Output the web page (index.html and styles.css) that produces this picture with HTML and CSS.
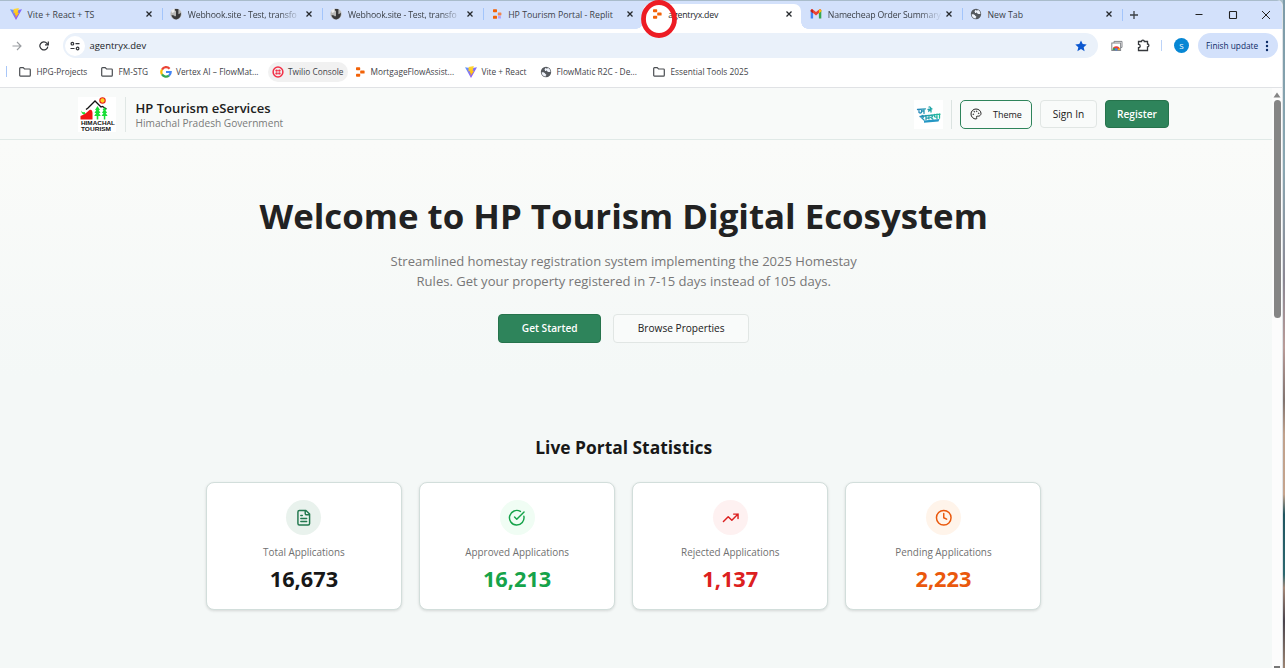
FILE: index.html
```
<!DOCTYPE html>
<html lang="en">
<head>
<meta charset="utf-8">
<title>HP Tourism eServices</title>
<link rel="stylesheet" href="styles.css">
</head>
<body>
<svg class="defs" width="0" height="0">
  <defs>
    <linearGradient id="bolt" x1="0" y1="0" x2="0" y2="1"><stop offset="0" stop-color="#ffd93b"/><stop offset="1" stop-color="#ffb300"/></linearGradient>
    <linearGradient id="vee" x1="0" y1="0" x2="1" y2="1"><stop offset="0" stop-color="#5a9dff"/><stop offset="1" stop-color="#a83bf5"/></linearGradient>
    <linearGradient id="teal" gradientUnits="userSpaceOnUse" x1="3" y1="0" x2="26" y2="0"><stop offset="0" stop-color="#2a86bd"/><stop offset="1" stop-color="#20bd9b"/></linearGradient>
    <symbol id="vite" viewBox="0 0 12 12"><path d="M0 1.200 6 12 12 1.200 6 2.300z" fill="url(#vee)"/><path d="M8.800 0 3.600.9 3.500 5.400l1.600-.3-.4 2.200 1.100-.3-.3 3 3.800-5.200-1.600.2z" fill="url(#bolt)"/></symbol>
    <symbol id="hook" viewBox="0 0 12 12"><circle cx="6" cy="6" r="5.600" fill="#b9b9b6"/><path d="M1 2.500 4 .8 4.500 4 2 5z" fill="#eee"/><path d="M5 1h3.400v5.200c1.500-.5 2-1 2.400-1.700.5 3-1 6.500-4.500 6.900C3.500 11.500 2 9.500 1.500 7l2.600.4c.3 1.300 1.900 1.200 1.900 0V3L5 2.500z" fill="#3a3a3a"/></symbol>
    <symbol id="replit" viewBox="0 0 12 12"><rect x="2" y="1.200" width="4.200" height="3" rx=".7" fill="#f26207"/><rect x="6.200" y="4.400" width="4.400" height="3.200" rx=".7" fill="#f26207"/><rect x="2" y="7.800" width="4.200" height="3" rx=".7" fill="#f26207"/></symbol>
    <symbol id="globe" viewBox="0 0 12 12"><circle cx="6" cy="6" r="5.200" fill="#55595e"/><path d="M1.700 6.300c1.800-.4 3 .3 3.400 1.200.3.800 1.500.6 1.200 1.500-.2.700-.9.600-.8 1.700C3 10.300 1.600 8.500 1.700 6.300zM5.200 1.700c.2 1.200-.9 1.300-.6 2 .3.800 1.800.3 2.300 1.100.5.900 1.700 1.700 3.500 1.100.2-1.700-.8-3.500-2.600-4.200-.1.900-1 1-1.400.8z" fill="#eef2fa"/></symbol>
    <symbol id="folder" viewBox="0 0 12 10"><path d="M.7 8.300V1.500q0-.8.800-.8h2.700L5.500 2h5q.8 0 .8.800v5.500q0 .9-.8.900h-9q-.8 0-.8-.9z" fill="none" stroke="#4a4d51" stroke-width="1.200"/></symbol>
    <symbol id="close" viewBox="0 0 8 8"><path d="M1.500 1.500 6.500 6.500M6.500 1.500 1.500 6.500" stroke="#25282c" stroke-width="1.300"/></symbol>
  </defs>
</svg>
<div class="screen">
  <div class="window">
    <div class="tabs">
      <div class="tab"><svg class="fav"><use href="#vite"/></svg><span class="label">Vite + React + TS</span><svg class="x"><use href="#close"/></svg></div>
      <div class="tab sep"><svg class="fav"><use href="#hook"/></svg><span class="label fade">Webhook.site - Test, transfo</span><svg class="x"><use href="#close"/></svg></div>
      <div class="tab sep"><svg class="fav"><use href="#hook"/></svg><span class="label fade">Webhook.site - Test, transfo</span><svg class="x"><use href="#close"/></svg></div>
      <div class="tab sep"><svg class="fav" viewBox="0 0 12 12"><rect x="2" y="1.200" width="4" height="3" rx=".6" fill="#f26207"/><rect x="6.800" y="4.400" width="3.600" height="3" rx=".6" fill="#f08550"/><rect x="2" y="7.800" width="4" height="3" rx=".6" fill="#f26207"/><rect x="7" y="8" width="3" height="2.500" rx=".6" fill="#b3a2ff"/></svg><span class="label">HP Tourism Portal - Replit</span><svg class="x"><use href="#close"/></svg></div>
      <div class="tab active"><svg class="fav"><use href="#replit"/></svg><span class="label">agentryx.dev</span><svg class="x"><use href="#close"/></svg>
        <svg class="ring" viewBox="0 0 36 38"><ellipse cx="18" cy="19" rx="15.500" ry="16.500" fill="none" stroke="#ed1c24" stroke-width="4.800"/></svg>
      </div>
      <div class="tab"><svg class="fav" viewBox="0 0 12 12"><path d="M.7 2.500v8h2.400V4.600z" fill="#4285f4"/><path d="M8.900 4.600v5.900h2.400v-8z" fill="#34a853"/><path d="M.7 3V2.400C.7 1.300 2 1 2.800 1.600L6 4.100l3.200-2.500c.8-.6 2.100-.3 2.100.8V3L6 7.400z" fill="#ea4335"/><path d="M9 1.800c1-.7 2.300-.3 2.300.8v1L9 5.300z" fill="#fbbc04"/><path d="M.7 2.500v1L3 5.200V1.800C2 1 .7 1.400.7 2.500z" fill="#c5221f"/></svg><span class="label fade">Namecheap Order Summary</span><svg class="x"><use href="#close"/></svg></div>
      <div class="tab sep newtab"><svg class="fav"><use href="#globe"/></svg><span class="label">New Tab</span><svg class="x"><use href="#close"/></svg></div>
      <div class="controls sep">
        <svg width="10" height="10" viewBox="0 0 10 10"><path d="M5 1v8M1 5h8" stroke="#3b3f44" stroke-width="1.300"/></svg>
        <svg class="min" width="10" height="10" viewBox="0 0 10 10"><path d="M1.500 4.500h7" stroke="#222" stroke-width="1"/></svg>
        <svg width="10" height="10" viewBox="0 0 10 10"><rect x="1.500" y="1.500" width="7" height="7" rx=".6" fill="none" stroke="#222" stroke-width="1.100"/></svg>
        <svg width="10" height="10" viewBox="0 0 10 10"><path d="M1 1l8 8M9 1 1 9" stroke="#222" stroke-width="1"/></svg>
      </div>
    </div>
    <div class="toolbar">
      <svg class="fwd" viewBox="0 0 10 10"><path d="M.5 5h8.500M5 1l4 4-4 4" fill="none" stroke="#9a9da1" stroke-width="1.100"/></svg>
      <svg class="reload" viewBox="0 0 10 10"><path d="M8.800 5.600A4 4 0 1 1 7.900 2.300L9 3.600" fill="none" stroke="#303338" stroke-width="1.200"/><path d="M9.300.5v3.300H6" fill="none" stroke="#303338" stroke-width="1.200"/></svg>
      <div class="omnibox">
        <span class="site"><svg width="10" height="10" viewBox="0 0 10 10" fill="none" stroke="#303338" stroke-width="1.200"><circle cx="2.400" cy="2.700" r="1.300"/><path d="M5.500 2.700h4M.5 7.500h4"/><circle cx="7.600" cy="7.500" r="1.300"/></svg></span>
        <span class="url">agentryx.dev</span>
        <svg class="star" viewBox="0 0 12 12"><path d="m6 .4 1.700 3.700 4 .4-3 2.700.9 4L6 9.100l-3.600 2.100.9-4-3-2.700 4-.4z" fill="#0b57d0"/></svg>
      </div>
      <svg class="lens" viewBox="0 0 12 12"><path d="M3 3V1.400h8v6H9.500" fill="none" stroke="#85888c" stroke-width="1"/><rect x=".8" y="3" width="8.800" height="7.500" fill="#fff" stroke="#85888c"/><path d="M1.600 10a3.700 3.700 0 0 1 7.400 0z" fill="#ea4335"/><path d="M1.600 10a3.600 3.600 0 0 1 1.100-2.500L5.200 10z" fill="#34a853"/><path d="M6 10h3a3.600 3.600 0 0 0-.7-2z" fill="#fbbc04"/><circle cx="5.300" cy="9.300" r="1.200" fill="#4285f4"/></svg>
      <svg class="puzzle" viewBox="0 0 13 13"><path d="M1.500 2.500h3a1.400 1.400 0 0 1 2.800 0h3.200V5a1.400 1.400 0 0 1 0 2.800v3.700h-9V8.700a1.700 1.700 0 0 0 0-3.400z" fill="none" stroke="#35383c" stroke-width="1.300"/></svg>
      <span class="bar"></span>
      <span class="avatar">S</span>
      <span class="update"><span>Finish update</span><svg width="4" height="12" viewBox="0 0 4 12" fill="#0b2a66"><circle cx="2" cy="2" r="1.200"/><circle cx="2" cy="6" r="1.200"/><circle cx="2" cy="10" r="1.200"/></svg></span>
    </div>
    <div class="bookmarks">
      <span class="bm b1"><svg class="fold"><use href="#folder"/></svg>HPG-Projects</span>
      <span class="bm b2"><svg class="fold"><use href="#folder"/></svg>FM-STG</span>
      <span class="bm b3"><svg class="fav" viewBox="0 0 12 12" fill="none" stroke-width="2.200"><path d="M9.600 2.700A4.700 4.700 0 0 0 2 3.600" stroke="#ea4335"/><path d="M2 3.600a4.700 4.700 0 0 0 0 4.800" stroke="#fbbc04"/><path d="M2 8.400a4.700 4.700 0 0 0 7 1.200" stroke="#34a853"/><path d="M9 9.600A4.700 4.700 0 0 0 10.700 6H6" stroke="#4285f4"/></svg>Vertex AI – FlowMat...</span>
      <span class="bm b4"><svg class="fav" viewBox="0 0 12 12"><circle cx="6" cy="6" r="4.900" fill="none" stroke="#f22f46" stroke-width="1.500"/><g fill="#f22f46"><circle cx="4.600" cy="4.600" r="1.200"/><circle cx="7.400" cy="4.600" r="1.200"/><circle cx="4.600" cy="7.400" r="1.200"/><circle cx="7.400" cy="7.400" r="1.200"/></g></svg>Twilio Console</span>
      <span class="bm b5"><svg class="fav"><use href="#replit"/></svg>MortgageFlowAssist...</span>
      <span class="bm b6"><svg class="fav"><use href="#vite"/></svg>Vite + React</span>
      <span class="bm b7"><svg class="fav"><use href="#globe"/></svg>FlowMatic R2C - De...</span>
      <span class="bm b8"><svg class="fold"><use href="#folder"/></svg>Essential Tools 2025</span>
    </div>
    <div class="viewport">
      <div class="page">
        <header class="header">
          <svg class="logo" viewBox="0 0 38 35"><rect width="38" height="35" fill="#fff"/><path d="M2.500 22.500V19c3-1 6-3 9-6 2-1 3 1 3 3v6.500z" fill="#f01515"/><path d="M3.500 13.500c.5 2 2 2 3 1.500l1 1.500-2 1C4 16.500 3 15 3.500 13.500z" fill="#19dc32"/><path d="m8 12.500 2-1.500 7-7 6 6 1.500-.5 4 2.500" fill="none" stroke="#111" stroke-width="1.300"/><circle cx="24.500" cy="3.500" r="2.700" fill="#ffd21c" stroke="#e8201b" stroke-width="1.100"/><path d="m19.500 9-2.500 4h1.300L16.500 16h1.700l-2 3h2.500v3.500h1.600V19h2.500l-2-3h1.700L20.700 13H22zM26.500 10l-2 3h1.100l-1.600 3h1.500l-2 3h2.300v3.500h1.500V19h2.300l-2-3h1.500l-1.600-3h1.100z" fill="#18df35"/><text x="3" y="28" textLength="34" lengthAdjust="spacingAndGlyphs">HIMACHAL</text><text x="3" y="34" textLength="30" lengthAdjust="spacingAndGlyphs">TOURISM</text></svg>
          <div class="brand"><div class="brand-name">HP Tourism eServices</div><div class="brand-sub">Himachal Pradesh Government</div></div>
          <svg class="campaign" viewBox="0 0 29 29"><rect width="29" height="29" fill="#fff"/><g fill="none" stroke="url(#teal)" stroke-width="1.300" stroke-linecap="round"><path d="M3.500 9.500 11.500 8.800M5 9.500v3q1.300 1 2.500 0V9.500M7.500 11h2.500M10 9.300V13.500M14 9.500l4-.7M17 9v3M14.800 11.500q-.5-1.500 2.200-1M15 7q1.500-.5 2 1.800"/><path d="M6 16.500l20-2.300M8 15.500c2.500 0 2 2.500-.2 2.500L10 20M12 15.500v4M12 17.800q2 .8 3-.3v-2V19M17 15c2 .5 2 2.300-.3 2.300l2.300 1.900M20.500 14.300v2.500q1.500.8 2.500 0v-3V18.500M25.500 14v4.200"/></g><path d="m10 20.600 15.500-1.600-1 2.400L10 22.700z" fill="#2597c4"/></svg>
          <div class="actions">
            <button class="btn theme"><svg width="12" height="12" viewBox="0 0 24 24" fill="none" stroke="#222" stroke-width="2"><circle cx="13.500" cy="6.500" r=".7"/><circle cx="17.500" cy="10.500" r=".7"/><circle cx="8.500" cy="7.500" r=".7"/><circle cx="6.500" cy="12.500" r=".7"/><path d="M12 2a10 10 0 1 0 0 20c1 0 1.700-.7 1.700-1.700 0-.4-.2-.8-.4-1.100-.3-.3-.5-.7-.5-1.100a1.600 1.600 0 0 1 1.700-1.700h2c3 0 5.500-2.500 5.500-5.500C22 6 17.500 2 12 2z"/></svg><span>Theme</span></button>
            <button class="btn signin">Sign In</button>
            <button class="btn green register">Register</button>
          </div>
        </header>
        <main>
          <h1>Welcome to HP Tourism Digital Ecosystem</h1>
          <p class="lead">Streamlined homestay registration system implementing the 2025 Homestay<br>Rules. Get your property registered in 7-15 days instead of 105 days.</p>
          <div class="cta"><button class="btn green start">Get Started</button><button class="btn browse">Browse Properties</button></div>
          <h2>Live Portal Statistics</h2>
          <div class="cards">
            <section class="card total"><span class="disc"><svg class="ico" viewBox="0 0 24 24"><path d="M15 2H6a2 2 0 0 0-2 2v16a2 2 0 0 0 2 2h12a2 2 0 0 0 2-2V7zM14 2v4a2 2 0 0 0 2 2h4M10 9H8M16 13H8M16 17H8"/></svg></span><span class="name">Total Applications</span><strong>16,673</strong></section>
            <section class="card approved"><span class="disc"><svg class="ico" viewBox="0 0 24 24"><path d="M21.800 10A10 10 0 1 1 17 3.300M9 11l3 3L22 4"/></svg></span><span class="name">Approved Applications</span><strong>16,213</strong></section>
            <section class="card rejected"><span class="disc"><svg class="ico" viewBox="0 0 24 24"><path d="m22 7-8.500 8.500-5-5L2 17M16 7h6v6"/></svg></span><span class="name">Rejected Applications</span><strong>1,137</strong></section>
            <section class="card pending"><span class="disc"><svg class="ico" viewBox="0 0 24 24"><circle cx="12" cy="12" r="10"/><path d="M12 6v6l4 2"/></svg></span><span class="name">Pending Applications</span><strong>2,223</strong></section>
          </div>
        </main>
      </div>
      <div class="scroll"><svg width="8" height="6" viewBox="0 0 8 6"><path d="M4 .5 7.500 5.500h-7z" fill="#858585"/></svg><span class="thumb"></span><span class="down"></span></div>
    </div>
  </div>
  <div class="desktop"></div>
</div>
</body>
</html>
```
FILE: styles.css
```
* { box-sizing: border-box; }
body { margin: 0; overflow: hidden; font-family: "Open Sans", "Noto Sans", sans-serif; }
svg { flex: none; display: block; }
.defs { position: absolute; }
.screen { display: flex; width: 1285px; height: 668px; background: #a9bfca; }
.window { width: 1283px; height: 668px; display: flex; flex-direction: column; background: #fff; border-top-right-radius: 6px; overflow: hidden; border-right: 1px solid #dfe3e6; }
.desktop { width: 2px; background: linear-gradient(#7d9ba8 0, #8aa7b2 25%, #8b8793 42%, #b99b98 52%, #81736f 60%, #c0a18c 65%, #c5a48d 74%, #1f5560 77%, #2d6870 86%, #a48878 88%, #49434c 93%, #9c8573 100%); }

.tabs { height: 29px; flex: none; display: flex; padding-left: 2px; background: #d3e1fb; border-top: 1px solid #a9bccb; color: #3c4148; font: 8.750px "Open Sans", sans-serif; }
.tab { width: 160.200px; height: 28px; display: flex; align-items: center; padding: 0 9px 2px 8px; position: relative; }
.sep::before { content: ""; width: 1px; height: 12px; background: #a3c5fb; margin-left: -8px; margin-right: 7px; }
.fav { width: 12px; height: 12px; }
.label { flex: 1; margin-left: 5.600px; padding-top: 2px; white-space: nowrap; }
.fade { letter-spacing: -.18px; -webkit-mask-image: linear-gradient(90deg, #000 78%, #0003 93%, transparent); mask-image: linear-gradient(90deg, #000 78%, #0003 93%, transparent); }
.x { width: 8px; height: 8px; }
.active { background: #fff; height: 25px; margin-top: 3px; padding-right: 8px; padding-bottom: 5px; width: 158px; margin-right: 1.500px; border-radius: 7px 7px 0 0; color: #25282c; letter-spacing: -.23px; }
.active::before, .active::after { content: ""; position: absolute; bottom: 0; width: 7px; height: 7px; }
.active::before { left: -7px; background: radial-gradient(circle at 0 0, transparent 6.500px, #fff 7px); }
.active::after { right: -7px; background: radial-gradient(circle at 100% 0, transparent 6.500px, #fff 7px); }
.ring { position: absolute; left: -2px; top: -4px; width: 36px; height: 38px; z-index: 2; }
.newtab { padding-right: 10px; }
.newtab .label { margin-left: 5px; }
.controls { flex: 1; display: flex; align-items: center; padding: 0 0 1px 7px; gap: 23.500px; }
.controls.sep::before { margin: 0 -17.500px 0 -8px; }
.controls .min { margin-left: 32px; }

.toolbar { height: 31px; flex: none; display: flex; align-items: center; padding: 2px 4px 0 12px; }
.fwd { width: 10px; height: 10px; margin-right: 17px; }
.reload { width: 10px; height: 10px; margin-right: 14px; }
.omnibox { width: 1035px; flex: none; height: 25px; border-radius: 13px; background: #eaf1fa; display: flex; align-items: center; padding: 0 11.500px 0 2px; }
.site { width: 20px; height: 20px; border-radius: 50%; background: #fff; display: grid; place-items: center; }
.url { flex: 1; margin-left: 4.500px; font-size: 9.450px; color: #202327; }
.star { width: 12px; height: 12px; }
.lens { width: 12px; height: 12px; margin-left: 13px; }
.puzzle { width: 13px; height: 13px; margin-left: 14px; }
.bar { width: 1px; height: 11px; background: #bcd3f8; margin-left: 11px; }
.avatar { flex: none; width: 15px; height: 15px; border-radius: 50%; background: #0787d4; color: #fff; font-size: 8px; line-height: 15px; text-align: center; margin-left: 12px; }
.update { flex: none; width: 80px; height: 25px; border-radius: 13px; background: #d3e1fb; color: #0b2a66; font-size: 8.300px; font-weight: 500; display: flex; align-items: center; justify-content: space-between; padding: 0 9px 0 8px; margin-left: 9px; white-space: nowrap; }

.bookmarks { height: 27px; flex: none; display: flex; align-items: center; padding: 0 0 4px 6px; font-size: 8.300px; color: #3f4348; }
.bookmarks::before { content: ""; width: 1px; height: 11px; background: #a9c7f8; }
.bm { flex: none; display: flex; align-items: center; gap: 5.500px; height: 20px; white-space: nowrap; }
.fold { width: 12px; height: 10px; }
.b1 { width: 82px; margin-left: 12px; }
.b2 { width: 59px; }
.b3 { width: 108px; gap: 4px; }
.b4 { width: 80px; height: 20px; border-radius: 10px; background: #f1f1f1; padding-left: 4px; gap: 4px; }
.b5 { margin-left: 6px; width: 111px; gap: 4.500px; }
.b6 { width: 75px; gap: 4.500px; }
.b7 { width: 113px; gap: 4.500px; }

.viewport { flex: 1; display: flex; border-top: 1px solid #e0e2e5; background: #fcfcfc; min-height: 0; }
.page { width: 1272px; background: linear-gradient(#fafbf9 0, #fafbf9 55px, #f4f8f7 290px, #f4f8f7 100%); }
.header { height: 52px; display: flex; align-items: center; padding-left: 78px; padding-top: 1px; border-bottom: 1.500px solid #e0e9e7; background: #f8faf9; }
.logo { width: 38px; height: 35px; font: bold 5.800px "Liberation Sans", Arial, sans-serif; fill: #111; }
.brand { margin-left: 9px; padding-left: 9.500px; height: 35px; border-left: 1px solid #e0e7e5; width: 789px; }
.brand-name { font-size: 13.050px; font-weight: 600; line-height: 17px; color: #202020; padding-top: 3px; }
.brand-sub { font-size: 10.150px; line-height: 12px; color: #7a7a7a; }
.campaign { width: 29px; height: 29px; }
.actions { display: flex; align-items: center; height: 29px; border-left: 1px solid #dbe3e1; margin-left: 8px; padding-left: 8px; gap: 8px; }
.btn { font: 500 10.150px "Open Sans", sans-serif; color: #202020; background: #f9fbfa; border: 1px solid #e1e6e4; border-radius: 4px; padding: 0; height: 28px; white-space: nowrap; }
.theme { width: 72px; height: 29px; border-color: #2e845b; border-radius: 5px; display: flex; align-items: center; padding-left: 9px; gap: 11px; font-size: 9px; }
.signin { width: 57px; }
.green { background: #2e845b; border-color: #26734c; color: #fff; font-weight: 600; }
.register { width: 64px; font-size: 10.150px; }

main { width: 1247.400px; display: flex; flex-direction: column; align-items: center; }
h1 { margin: 52px 0 0; font-size: 34.800px; line-height: 48px; font-weight: 700; color: #222; white-space: nowrap; }
.lead { margin: 11px 0 0; font-size: 13.050px; line-height: 20.300px; color: #777; text-align: center; }
.cta { display: flex; gap: 12px; margin-top: 22.400px; }
.cta .btn { height: 29px; font-size: 10.150px; }
.start { width: 103px; }
.browse { width: 136px; }
h2 { margin: 92.500px 0 0; font-size: 17.400px; line-height: 24px; font-weight: 700; color: #181818; }
.cards { display: grid; grid-template-columns: repeat(4, 196px); gap: 17.200px; margin-top: 23px; }
.card { height: 128px; border: 1px solid #d2dedb; border-radius: 8px; background: #fff; box-shadow: 0 1px 3px #0002; display: flex; flex-direction: column; align-items: center; padding-top: 17px; color: #171717; }
.disc { width: 35px; height: 35px; border-radius: 50%; display: grid; place-items: center; }
.ico { width: 17.500px; height: 17.500px; fill: none; stroke: currentColor; stroke-width: 2; stroke-linecap: round; stroke-linejoin: round; }
.name { font-size: 9.900px; line-height: 15px; color: #707070; margin-top: 10px; }
.card strong { font-size: 21.750px; line-height: 30px; margin-top: 4px; }
.total .disc { background: #e9f2ed; color: #23794f; }
.approved { color: #16a34a; }
.approved .disc { background: #f0fdf4; }
.rejected { color: #dc2020; }
.rejected .disc { background: #fef1f1; }
.pending { color: #ea580c; }
.pending .disc { background: #fff4ea; }

.scroll { flex: 1; display: flex; flex-direction: column; align-items: center; padding-top: 4px; background: #fcfcfc; }
.thumb { width: 7px; height: 218px; margin-top: 2px; border-radius: 4px; background: #858585; }
.down { width: 6px; height: 2px; margin-top: auto; background: #777; }
```
